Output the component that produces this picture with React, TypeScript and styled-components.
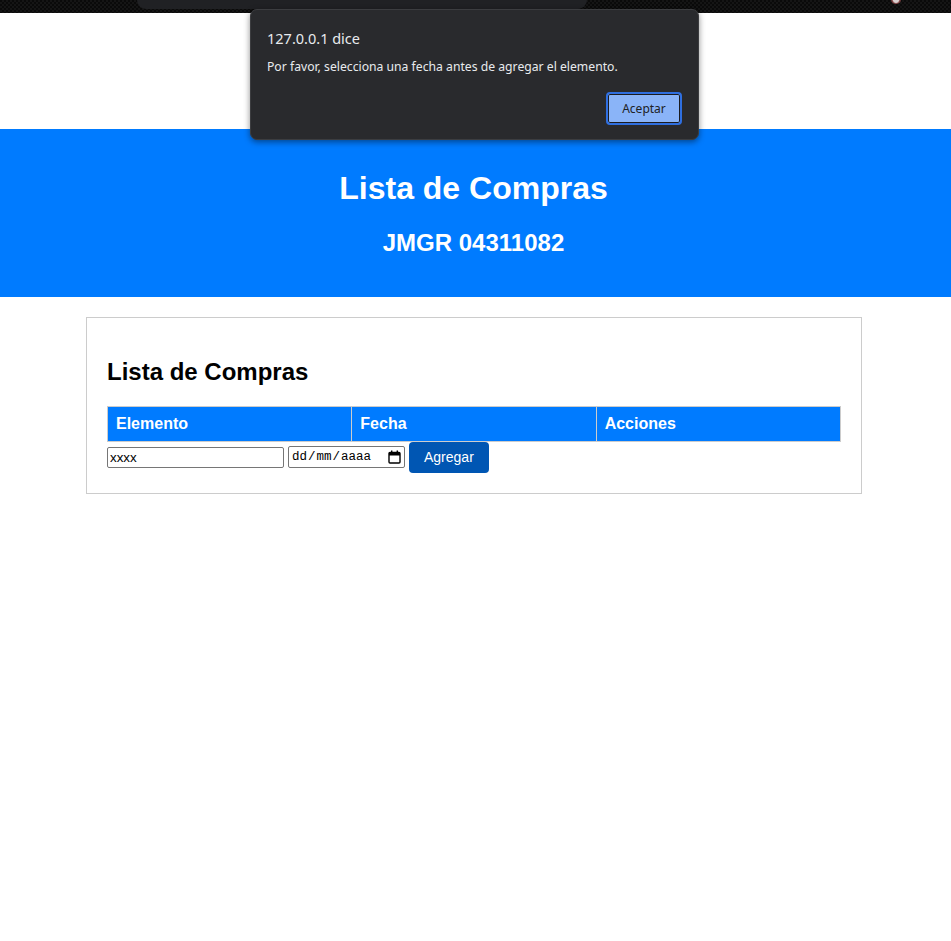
import React from "react";
import styled, { createGlobalStyle } from "styled-components";

const Global = createGlobalStyle`
  html, body { margin: 0; padding: 0; background: #fff; }
  body { font-family: "Liberation Sans", Arial, sans-serif; }
`;

const Page = styled.div`
  position: relative;
  width: 951px;
  min-height: 941px;
  background: #fff;
`;

const BrowserStrip = styled.div`
  height: 13px;
  background-color: #0b0b0b;
  background-image: repeating-conic-gradient(#151515 0 25%, #0a0a0a 0 50%);
  background-size: 4px 4px;
  display: flex;
  align-items: flex-start;
  padding-left: 137px;
  position: relative;
`;

const Omnibox = styled.div`
  width: 450px;
  height: 9px;
  background: #202124;
  border-radius: 0 0 9px 9px;
`;

const Avatar = styled.div`
  position: absolute;
  right: 50px;
  top: -3px;
  width: 10px;
  height: 7px;
  border-radius: 50%;
  background: radial-gradient(circle at 50% 40%, #d8cfcf 0 40%, #7a3a3a 60%, #222 100%);
`;

const Spacer = styled.div`
  height: 116px;
`;

const Header = styled.header`
  background: #007bff;
  color: #fff;
  text-align: center;
  padding: 20px 4px 20px 0;
`;

const Title = styled.h1`
  font-size: 32px;
  font-weight: bold;
  margin: 21.44px 0;
`;

const Subtitle = styled.h2`
  font-size: 24px;
  font-weight: bold;
  margin: 19.92px 0;
`;

const Card = styled.section`
  box-sizing: border-box;
  width: 776px;
  margin: 20px 0 0 86px;
  border: 1px solid #ccc;
  padding: 20px;
`;

const CardTitle = styled.h2`
  font-size: 24px;
  font-weight: bold;
  margin: 19.92px 0;
  color: #000;
`;

const Table = styled.table`
  width: 100%;
  border-collapse: collapse;
`;

const Th = styled.th`
  background: #007bff;
  color: #fff;
  text-align: left;
  font-size: 16px;
  font-weight: bold;
  padding: 8px;
  border: 1px solid #ccc;
  width: 33.33%;
`;

const FormRow = styled.div`
  display: flex;
  align-items: flex-start;
  gap: 4px;
`;

const TextInput = styled.input`
  box-sizing: border-box;
  width: 177px;
  height: 21px;
  margin-top: 5px;
  border: 1px solid #767676;
  border-radius: 2px;
  padding: 1px 2px;
  font-family: "Liberation Sans", Arial, sans-serif;
  font-size: 13.33px;
  color: #000;
  outline: none;
`;

const DateBox = styled.div`
  box-sizing: border-box;
  width: 117px;
  height: 22px;
  margin-top: 4px;
  border: 1px solid #767676;
  border-radius: 2px;
  display: flex;
  align-items: center;
  padding: 0 3px 0 3px;
  font-family: "Liberation Mono", "DejaVu Sans Mono", monospace;
  font-size: 12.5px;
  color: #000;
`;

const DateText = styled.span`
  flex: 1;
  white-space: pre;
`;

const Sep = styled.span`
  margin: 0 1px;
`;

const CalIcon = styled.svg`
  width: 13px;
  height: 14px;
  flex: none;
`;

const AddButton = styled.button`
  box-sizing: border-box;
  height: 31px;
  padding: 0 15px;
  background: #0056b3;
  color: #fff;
  border: none;
  border-radius: 4px;
  font-family: "Liberation Sans", Arial, sans-serif;
  font-size: 14px;
  cursor: pointer;
`;

const Dialog = styled.div`
  position: absolute;
  left: 250px;
  top: 9px;
  box-sizing: border-box;
  width: 449px;
  height: 131px;
  background: #292a2d;
  border: 1px solid #3c3d40;
  border-radius: 7px;
  box-shadow: 0 2px 6px rgba(0, 0, 0, 0.45);
  padding: 18px 16px 0 16px;
  display: flex;
  flex-direction: column;
  font-family: "Noto Sans", "Open Sans", sans-serif;
  color: #e8eaed;
`;

const DialogTitle = styled.div`
  font-size: 14.5px;
  line-height: 20px;
`;

const DialogMessage = styled.div`
  font-size: 12.2px;
  line-height: 18px;
  margin-top: 10px;
`;

const DialogActions = styled.div`
  display: flex;
  justify-content: flex-end;
  margin-top: 16px;
`;

const OkButton = styled.button`
  box-sizing: border-box;
  width: 76px;
  height: 33px;
  background: #8ab4f8;
  color: #202124;
  border: 2px solid #2f6fe0;
  box-shadow: inset 0 0 0 1px #1b1c1f;
  border-radius: 4px;
  font-family: "Noto Sans", "Open Sans", sans-serif;
  font-size: 12px;
  padding: 0;
`;

export default function App() {
  return (
    <Page>
      <Global />
      <BrowserStrip>
        <Omnibox />
        <Avatar />
      </BrowserStrip>
      <Spacer />
      <Header>
        <Title>Lista de Compras</Title>
        <Subtitle>JMGR 04311082</Subtitle>
      </Header>
      <Card>
        <CardTitle>Lista de Compras</CardTitle>
        <Table>
          <thead>
            <tr>
              <Th>Elemento</Th>
              <Th>Fecha</Th>
              <Th>Acciones</Th>
            </tr>
          </thead>
          <tbody />
        </Table>
        <FormRow>
          <TextInput defaultValue="xxxx" />
          <DateBox>
            <DateText>
              dd<Sep>/</Sep>mm<Sep>/</Sep>aaaa
            </DateText>
            <CalIcon viewBox="0 0 13 14">
              <rect x="1" y="2.5" width="11" height="10.5" rx="1" fill="none" stroke="#000" strokeWidth="1.4" />
              <rect x="1" y="2.5" width="11" height="3" fill="#000" />
              <rect x="3" y="0.5" width="1.4" height="3" fill="#000" />
              <rect x="8.6" y="0.5" width="1.4" height="3" fill="#000" />
            </CalIcon>
          </DateBox>
          <AddButton>Agregar</AddButton>
        </FormRow>
      </Card>
      <Dialog>
        <DialogTitle>127.0.0.1 dice</DialogTitle>
        <DialogMessage>Por favor, selecciona una fecha antes de agregar el elemento.</DialogMessage>
        <DialogActions>
          <OkButton>Aceptar</OkButton>
        </DialogActions>
      </Dialog>
    </Page>
  );
}
